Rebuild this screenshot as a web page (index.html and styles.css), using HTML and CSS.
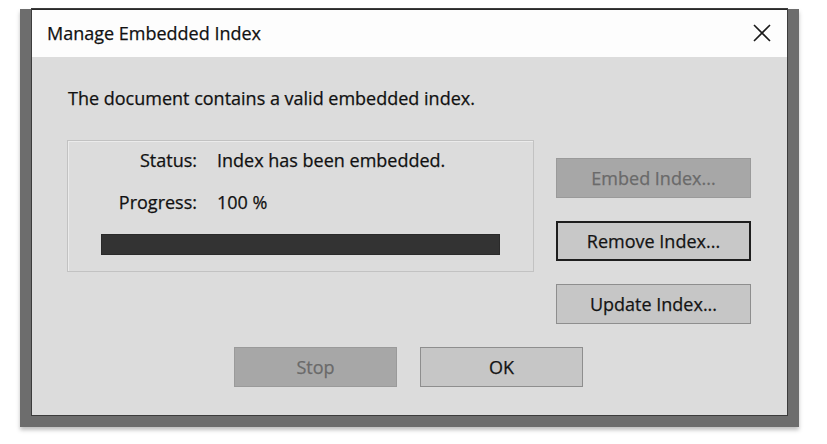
FILE: index.html
```html
<!DOCTYPE html>
<html>
<head>
<meta charset="utf-8">
<link rel="stylesheet" href="styles.css">
</head>
<body>
<div class="frame">
  <div class="dialog">
    <div class="titlebar">
      <span class="title">Manage Embedded Index</span>
      <svg class="close" width="18" height="18" viewBox="0 0 18 18"><path d="M1 1L17 17M17 1L1 17" stroke="#1a1a1a" stroke-width="1.6" fill="none"/></svg>
    </div>
    <div class="content">
      <p class="message">The document contains a valid embedded index.</p>
      <div class="main">
        <div class="group">
          <div class="fields">
            <span class="label">Status:</span><span class="value">Index has been embedded.</span>
            <span class="label">Progress:</span><span class="value">100 %</span>
          </div>
          <div class="bar"></div>
        </div>
        <div class="side">
          <button class="btn disabled">Embed Index...</button>
          <button class="btn default">Remove Index...</button>
          <button class="btn">Update Index...</button>
        </div>
      </div>
      <div class="footer">
        <button class="btn small disabled">Stop</button>
        <button class="btn small">OK</button>
      </div>
    </div>
  </div>
</div>
</body>
</html>
```

FILE: styles.css
```css
html, body {
  margin: 0;
  padding: 0;
  background: #ffffff;
}
body {
  width: 827px;
  height: 444px;
  overflow: hidden;
  font-family: "Open Sans", "Noto Sans", sans-serif;
  font-size: 18px;
  color: #111111;
  -webkit-text-stroke: 0.25px currentColor;
}
.frame {
  margin: 9px 0 0 20px;
  width: 779px;
  padding: 0 12px 12px 12px;
  box-sizing: border-box;
  background: #6d6d6d;
  box-shadow: 0 3px 4px rgba(0,0,0,0.25);
}
.dialog {
  width: 755px;
  background: #dcdcdc;
  box-shadow: 0 0 0 1px #3c3c3c;
}
.titlebar {
  height: 48px;
  box-sizing: border-box;
  border-top: 1px solid #2a2a2a;
  background: #fdfdfd;
  display: flex;
  align-items: center;
  justify-content: space-between;
  padding: 0 16px 0 15px;
}
.title {
  line-height: 24px;
  margin-top: -1px;
}
.close {
  display: block;
  margin-top: -2px;
}
.content {
  height: 358px;
  box-sizing: border-box;
  padding: 29px 36px 0 35px;
  display: flex;
  flex-direction: column;
}
.message {
  margin: 0;
  line-height: 24px;
  padding-left: 1px;
}
.main {
  margin-top: 30px;
  display: flex;
  align-items: flex-start;
  gap: 22px;
}
.group {
  width: 467px;
  height: 132px;
  box-sizing: border-box;
  border: 1px solid #c2c2c2;
  box-shadow: inset 1px 1px 0 #ebebeb;
  padding: 7px 0 0 33px;
}
.fields {
  display: grid;
  grid-template-columns: 96px auto;
  column-gap: 20px;
  row-gap: 18px;
  line-height: 24px;
}
.label {
  text-align: right;
}
.bar {
  margin-top: 20px;
  width: 399px;
  height: 21px;
  background: #333333;
  box-shadow: inset 0 0 0 1px #2a2a2a;
}
.side {
  margin-top: 18px;
  display: flex;
  flex-direction: column;
  gap: 23px;
}
.btn {
  font-family: inherit;
  font-size: 18px;
  color: #141414;
  -webkit-text-stroke: 0.25px currentColor;
  width: 195px;
  height: 40px;
  box-sizing: border-box;
  background: #c6c6c6;
  border: 1px solid #8e8e8e;
  padding: 0;
  line-height: 24px;
  margin: 0;
}
.btn.disabled {
  background: #a7a7a7;
  border-color: #9a9a9a;
  color: #6a6a6a;
}
.btn.default {
  border: 2px solid #1e1e1e;
  background: #c8c8c8;
}
.footer {
  margin-top: 23px;
  display: flex;
  justify-content: center;
  gap: 23px;
  padding-right: 1px;
}
.btn.small {
  width: 163px;
}
```
